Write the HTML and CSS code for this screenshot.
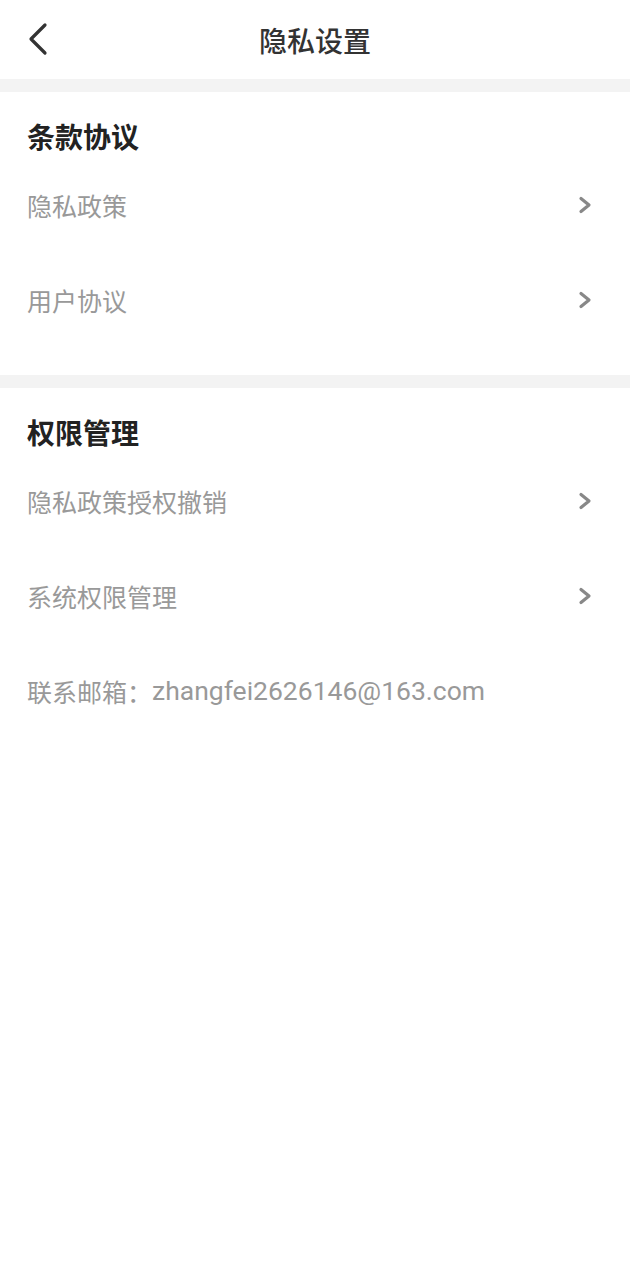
FILE: index.html
```html
<!DOCTYPE html>
<html lang="zh-CN">
<head>
  <meta charset="UTF-8">
  <title>隐私设置</title>
  <meta name="viewport" content="width=device-width, initial-scale=1.0">
  <link rel="stylesheet" href="styles.css">
</head>
<body>
  <header class="topbar">
    <a class="back" href="#">
      <svg width="22" height="34" viewBox="0 0 22 34">
        <path d="M18 3 L4 17 L18 31" fill="none" stroke="#333" stroke-width="3.2" stroke-linecap="round" stroke-linejoin="round"/>
      </svg>
    </a>
    <h1 class="title">隐私设置</h1>
  </header>

  <div class="gap"></div>

  <section class="group">
    <h2 class="group-title">条款协议</h2>
    <a class="row" href="#"><span>隐私政策</span><svg class="arrow" viewBox="0 0 14 18"><path d="M3 2.5 L11 9 L3 15.5"/></svg></a>
    <a class="row" href="#"><span>用户协议</span><svg class="arrow" viewBox="0 0 14 18"><path d="M3 2.5 L11 9 L3 15.5"/></svg></a>
  </section>

  <div class="gap"></div>

  <section class="group">
    <h2 class="group-title">权限管理</h2>
    <a class="row" href="#"><span>隐私政策授权撤销</span><svg class="arrow" viewBox="0 0 14 18"><path d="M3 2.5 L11 9 L3 15.5"/></svg></a>
    <a class="row" href="#"><span>系统权限管理</span><svg class="arrow" viewBox="0 0 14 18"><path d="M3 2.5 L11 9 L3 15.5"/></svg></a>
    <div class="row contact">联系邮箱：<span class="mail">zhangfei2626146@163.com</span></div>
  </section>
</body>
</html>
```

FILE: styles.css
```css
* {
  box-sizing: border-box;
}

body {
  margin: 0;
  background: #fff;
  font-family: Roboto, "Noto Sans CJK SC", sans-serif;
  color: #333;
}

.topbar {
  height: 79px;
  display: flex;
  align-items: center;
  justify-content: center;
  position: relative;
}

.back {
  position: absolute;
  left: 27px;
  top: 22px;
  display: block;
  line-height: 0;
}

.title {
  margin: 0;
  font-size: 28px;
  font-weight: 500;
  color: #333;
}

.gap {
  height: 13px;
  background: #f3f3f3;
}

.group {
  padding: 27px 0 26px;
}

.group-title {
  margin: 0;
  padding: 0 27px;
  height: 40px;
  line-height: 40px;
  font-size: 28px;
  font-weight: 700;
  color: #222;
}

.row {
  height: 95px;
  display: flex;
  align-items: center;
  justify-content: space-between;
  padding: 0 38px 4px 27px;
  font-size: 25px;
  color: #999;
  text-decoration: none;
}

.contact {
  justify-content: flex-start;
}

.mail {
  font-size: 26.5px;
}

.arrow {
  width: 14px;
  height: 18px;
  fill: none;
  stroke: #888;
  stroke-width: 3.2;
  stroke-linecap: round;
  stroke-linejoin: round;
}
```
